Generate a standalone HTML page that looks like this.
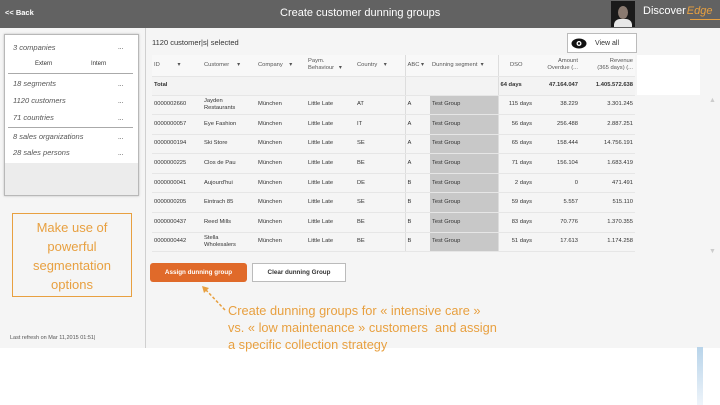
<!DOCTYPE html>
<html><head><meta charset="utf-8"><style>
*{margin:0;padding:0;box-sizing:border-box}
body{width:720px;height:405px;overflow:hidden;background:#fff;font-family:"Liberation Sans",sans-serif;position:relative;color:#333}
.a{position:absolute}
.hdr{left:0;top:0;width:720px;height:28px;background:#626262}
.t{font-size:6.5px;white-space:nowrap}
table{position:absolute;left:152px;top:55px;width:483px;border-collapse:collapse;table-layout:fixed;font-size:5.8px}
td{height:19.6px;padding:0 2px;vertical-align:middle;border-bottom:1px solid #e6e6e6;white-space:nowrap;overflow:hidden;line-height:1.25}
tr.h td{background:#f8f8f8;height:21px;color:#555}
tr.tot td{background:#f3f3f3;font-weight:bold;height:19px}
td.g{background:#c8c8c8}
td.r{text-align:right}
td.vl{border-left:1px solid #ddd}
</style></head><body>
<div class="a" style="left:0;top:28px;width:720px;height:320px;background:#f5f5f5"></div>
<div class="a hdr"></div>
<div class="a" style="left:5px;top:8px;color:#fff;font-size:7.5px;font-weight:bold">&lt;&lt; Back</div>
<div class="a" style="left:280px;top:7px;color:#fff;font-size:11px">Create customer dunning groups</div>
<div class="a" style="left:611px;top:1px;width:24px;height:26px;background:#1a1a1a"><div class="a" style="left:7px;top:5px;width:10px;height:13px;border-radius:50%;background:#8a7a70"></div><div class="a" style="left:3px;top:18px;width:18px;height:8px;background:#e8e8e8;border-radius:6px 6px 0 0"></div></div>
<div class="a" style="left:643px;top:5px;color:#fff;font-size:11px">Discover<span style="color:#e8a040;font-style:italic;font-size:11px;margin-left:1px">Edge</span></div>
<div class="a" style="left:690px;top:19px;width:30px;height:1px;background:#e8a040"></div>
<div class="a" style="left:145px;top:28px;width:1px;height:320px;background:#d0d0d0"></div>
<div class="a" style="left:4px;top:34px;width:135px;height:162px;border:1px solid #b8b8b8;background:#fff;box-shadow:0 0 2px #bbb"></div>
<div class="a" style="left:5px;top:163px;width:133px;height:32px;background:#ececec"></div>
<div class="a t" style="left:13px;top:43px;font-style:italic;color:#555;font-size:7.5px">3 companies</div>
<div class="a t" style="left:118px;top:44px">...</div>
<div class="a" style="left:9px;top:59px;width:121px;height:12px;background:#fff"></div>
<div class="a t" style="left:35px;top:61px;font-size:6px">Extern</div><div class="a t" style="left:91px;top:61px;font-size:6px">Intern</div>
<div class="a" style="left:8px;top:73px;width:125px;height:1px;background:#aaa"></div>
<div class="a t" style="left:13px;top:79px;font-style:italic;color:#555;font-size:7.5px">18 segments</div><div class="a t" style="left:118px;top:81px">...</div>
<div class="a t" style="left:13px;top:96px;font-style:italic;color:#555;font-size:7.5px">1120 customers</div><div class="a t" style="left:118px;top:98px">...</div>
<div class="a t" style="left:13px;top:113px;font-style:italic;color:#555;font-size:7.5px">71 countries</div><div class="a t" style="left:118px;top:115px">...</div>
<div class="a" style="left:8px;top:127px;width:125px;height:1px;background:#aaa"></div>
<div class="a t" style="left:13px;top:132px;font-style:italic;color:#555;font-size:7.5px">8 sales organizations</div><div class="a t" style="left:118px;top:134px">...</div>
<div class="a t" style="left:13px;top:148px;font-style:italic;color:#555;font-size:7.5px">28 sales persons</div><div class="a t" style="left:118px;top:150px">...</div>
<div class="a" style="left:12px;top:213px;width:120px;height:84px;border:1px solid #e8a040;color:#e8a040;font-size:13px;text-align:center;line-height:19px;padding-top:4px">Make use of<br>powerful<br>segmentation<br>options</div>
<div class="a t" style="left:10px;top:335px;font-size:5.5px;color:#555">Last refresh on Mar 11,2015 01:51|</div>
<div class="a" style="left:152px;top:38px;font-size:7.5px">1120 customer|s| selected</div>
<div class="a" style="left:567px;top:33px;width:70px;height:20px;border:1px solid #bbb;background:#fff"><svg class="a" style="left:3px;top:4px" width="16" height="11"><ellipse cx="8" cy="5.5" rx="7.5" ry="5" fill="#111"/><circle cx="8" cy="5.5" r="2.5" fill="#fff"/><circle cx="8" cy="5.5" r="1.2" fill="#111"/></svg><div class="a t" style="left:27px;top:6px;font-size:7px">View all</div></div>
<div class="a" style="left:637px;top:55px;width:63px;height:40px;background:#fff"></div>
<div class="a" style="left:709px;top:97px;color:#ccc;font-size:7px">▲</div>
<div class="a" style="left:709px;top:248px;color:#ccc;font-size:7px">▼</div>
<div class="a" style="left:697px;top:347px;width:6px;height:58px;background:linear-gradient(#b8d4ea,#eef4fa)"></div>
<table>
<colgroup><col style="width:50px"><col style="width:54px"><col style="width:50px"><col style="width:49px"><col style="width:50px"><col style="width:25px"><col style="width:68px"><col style="width:36px"><col style="width:46px"><col style="width:55px"></colgroup>
<tr class="h"><td>ID &nbsp; &nbsp; &nbsp; &nbsp; &nbsp; ▾</td><td>Customer &nbsp; &nbsp; ▾</td><td>Company &nbsp; &nbsp;▾</td><td>Paym.<br>Behaviour &nbsp; ▾</td><td>Country &nbsp; &nbsp;▾</td><td class="vl">ABC ▾</td><td>Dunning segment &nbsp;▾</td><td class="vl" style="text-align:center">DSO</td><td class="r">Amount<br>Overdue (...</td><td class="r">Revenue<br>(365 days) (...</td></tr>
<tr class="tot"><td>Total</td><td></td><td></td><td></td><td></td><td class="vl"></td><td></td><td class="vl">64 days</td><td class="r">47.164.047</td><td class="r">1.405.572.638</td></tr>
<tr><td>0000002660</td><td>Jayden<br>Restaurants</td><td>München</td><td>Little Late</td><td>AT</td><td class="vl">A</td><td class="g">Test Group</td><td class="vl r">115 days</td><td class="r">38.229</td><td class="r">3.301.245</td></tr>
<tr><td>0000000057</td><td>Eye Fashion</td><td>München</td><td>Little Late</td><td>IT</td><td class="vl">A</td><td class="g">Test Group</td><td class="vl r">56 days</td><td class="r">256.488</td><td class="r">2.887.251</td></tr>
<tr><td>0000000194</td><td>Ski Store</td><td>München</td><td>Little Late</td><td>SE</td><td class="vl">A</td><td class="g">Test Group</td><td class="vl r">65 days</td><td class="r">158.444</td><td class="r">14.756.191</td></tr>
<tr><td>0000000225</td><td>Clos de Pau</td><td>München</td><td>Little Late</td><td>BE</td><td class="vl">A</td><td class="g">Test Group</td><td class="vl r">71 days</td><td class="r">156.104</td><td class="r">1.683.419</td></tr>
<tr><td>0000000041</td><td>Aujourd'hui</td><td>München</td><td>Little Late</td><td>DE</td><td class="vl">B</td><td class="g">Test Group</td><td class="vl r">2 days</td><td class="r">0</td><td class="r">471.491</td></tr>
<tr><td>0000000205</td><td>Eintrach 85</td><td>München</td><td>Little Late</td><td>SE</td><td class="vl">B</td><td class="g">Test Group</td><td class="vl r">59 days</td><td class="r">5.557</td><td class="r">515.110</td></tr>
<tr><td>0000000437</td><td>Reed Mills</td><td>München</td><td>Little Late</td><td>BE</td><td class="vl">B</td><td class="g">Test Group</td><td class="vl r">83 days</td><td class="r">70.776</td><td class="r">1.370.355</td></tr>
<tr><td>0000000442</td><td>Stella<br>Wholesalers</td><td>München</td><td>Little Late</td><td>BE</td><td class="vl">B</td><td class="g">Test Group</td><td class="vl r">51 days</td><td class="r">17.613</td><td class="r">1.174.258</td></tr>
</table>
<div class="a" style="left:150px;top:263px;width:97px;height:19px;background:#e06a2a;border-radius:3px;color:#fff;font-size:6.3px;font-weight:bold;text-align:center;line-height:19px">Assign dunning group</div>
<div class="a" style="left:252px;top:263px;width:94px;height:19px;background:#fff;border:1px solid #bbb;font-size:6.3px;font-weight:bold;text-align:center;line-height:17px">Clear dunning Group</div>
<svg class="a" style="left:198px;top:282px" width="32" height="32"><path d="M27 28 L8 8" stroke="#e8a040" stroke-width="1.5" stroke-dasharray="3,2" fill="none"/><path d="M4 4 L11 6 L6 11 Z" fill="#e8a040"/></svg>
<div class="a" style="left:228px;top:302px;color:#e8a040;font-size:12.8px;line-height:17px;white-space:nowrap">Create dunning groups for « intensive care »<br>vs. « low maintenance » customers &nbsp;and assign<br>a specific collection strategy</div>
</body></html>
